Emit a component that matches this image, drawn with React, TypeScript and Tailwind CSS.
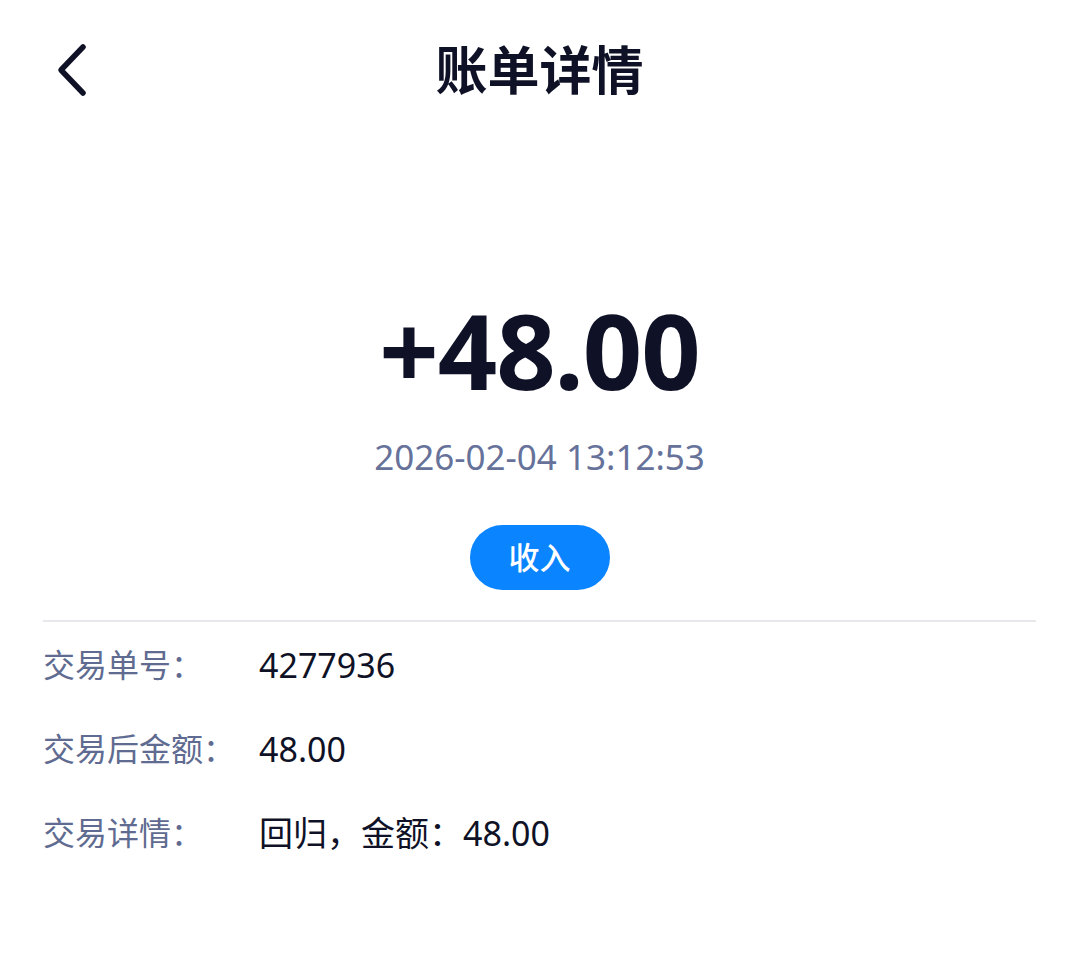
import React from 'react';

const rows = [
  { label: '交易单号：', value: '4277936' },
  { label: '交易后金额：', value: '48.00' },
  { label: '交易详情：', value: '回归，金额：48.00' },
];

const font = { fontFamily: '"Noto Sans", "Noto Sans CJK SC", sans-serif' };

export default function App() {
  return (
    <div className="w-[1079px] h-[954px] bg-white text-[#0f1226]" style={font}>
      {/* Header */}
      <div className="relative h-[140px] flex items-center justify-center">
        <button className="absolute left-[50px] top-[40px] w-[44px] h-[60px] flex items-center justify-center" aria-label="back">
          <svg width="36" height="54" viewBox="0 0 36 54" fill="none">
            <path d="M29 4 L7 27 L29 50" stroke="#0f1226" strokeWidth="5.5" strokeLinecap="round" strokeLinejoin="round" />
          </svg>
        </button>
        <h1 className="text-[52px] font-bold leading-none">账单详情</h1>
      </div>

      {/* Amount */}
      <div className="flex flex-col items-center pt-[150px]">
        <div className="text-[104px] font-bold leading-[120px] tracking-[-1px]">+48.00</div>
        <div className="mt-[25px] text-[35px] leading-[44px] text-[#66729a]">2026-02-04 13:12:53</div>
        <div className="mt-[46px] w-[140px] h-[65px] rounded-full bg-[#0a84ff] flex items-center justify-center text-white text-[31px] font-medium">
          收入
        </div>
      </div>

      {/* Details */}
      <div className="mx-[43px] mt-[30px] border-t-2 border-[#e8e8ec]">
        <div className="pt-[21px] flex flex-col gap-[40px]">
          {rows.map((r) => (
            <div key={r.label} className="flex items-center h-[44px]">
              <div className="w-[216px] text-[32px] text-[#5f6b90]">{r.label}</div>
              <div className="text-[34px] text-[#0f1226]">{r.value}</div>
            </div>
          ))}
        </div>
      </div>
    </div>
  );
}
